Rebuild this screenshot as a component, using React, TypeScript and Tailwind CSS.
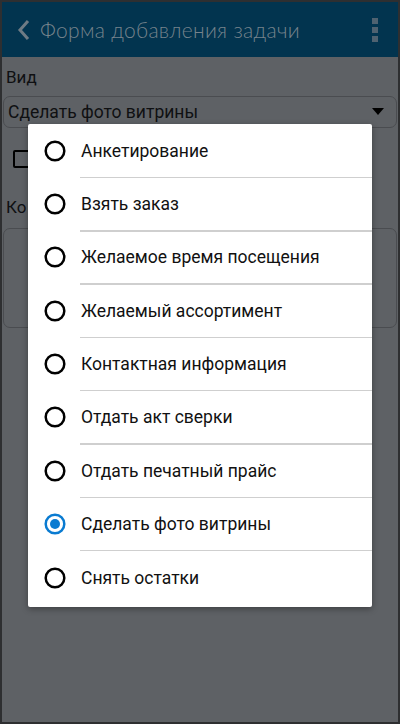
import React from "react";

const items = [
  "Анкетирование",
  "Взять заказ",
  "Желаемое время посещения",
  "Желаемый ассортимент",
  "Контактная информация",
  "Отдать акт сверки",
  "Отдать печатный прайс",
  "Сделать фото витрины",
  "Снять остатки",
];

function Radio({ checked }: { checked: boolean }) {
  return (
    <svg width="24" height="24" viewBox="0 0 24 24">
      <circle cx="12" cy="12" r="9.3" fill="none" stroke={checked ? "#0a7bd1" : "#000"} strokeWidth="2.5" />
      {checked && <circle cx="12" cy="12" r="5" fill="#0a7bd1" />}
    </svg>
  );
}

export default function App() {
  return (
    <div
      className="w-[400px] h-[724px] bg-[#2e2f31] p-[2px] overflow-hidden relative"
      style={{ fontFamily: "Roboto, 'Noto Sans', sans-serif" }}
    >
      <div className="w-full h-full bg-[#5e6165] flex flex-col">
        <div className="h-[55px] bg-[#02344f] flex items-center pl-[14px] pr-[20px]">
          <svg width="16" height="24" viewBox="0 0 16 24">
            <path d="M12 3 L4 12 L12 21" fill="none" stroke="#6f7b84" strokeWidth="3" />
          </svg>
          <span
            className="ml-[8px] text-[21px] text-[#76838c] font-light tracking-[0.3px]"
            style={{ fontFamily: "Lato, 'DejaVu Sans', sans-serif" }}
          >
            Форма добавления задачи
          </span>
          <div className="ml-auto flex flex-col gap-[3px]">
            <div className="w-[6px] h-[6px] bg-[#4f6270]" />
            <div className="w-[6px] h-[6px] bg-[#4f6270]" />
            <div className="w-[6px] h-[6px] bg-[#4f6270]" />
          </div>
        </div>
        <div className="px-[1px] pt-[10px] text-[#0f1012]">
          <div className="text-[17px] leading-[20px] pl-[3px]">Вид</div>
          <div className="mt-[9px] h-[32px] border border-[#4a4c50] rounded-[7px] flex items-center pl-[4px] pr-[12px]">
            <span className="text-[17.5px]">Сделать фото витрины</span>
            <svg className="ml-auto" width="12" height="8" viewBox="0 0 12 8">
              <path d="M0 0 H12 L6 7 Z" fill="#000" />
            </svg>
          </div>
          <div className="mt-[22px] ml-[10px] w-[18px] h-[18px] border-2 border-black rounded-[2px]" />
          <div className="mt-[27px] text-[17px] pl-[3px]">Ко</div>
          <div className="mt-[7px] h-[100px] border border-[#4a4c50] rounded-[7px]" />
        </div>
      </div>

      <div className="absolute left-[28px] top-[124px] w-[344px] bg-white rounded-[2px] shadow-[0_2px_6px_rgba(0,0,0,0.35)] pt-[1px] pb-[2px]">
        {items.map((t, i) => (
          <div key={t} className="h-[53.3px] flex flex-col">
            <div className="flex-1 flex items-center">
              <div className="w-[52px] flex pl-[15px]">
                <Radio checked={i === 7} />
              </div>
              <span className="ml-[1px] text-[17.5px] text-[#111]">{t}</span>
            </div>
            {i < items.length - 1 && <div className="ml-[52px] h-[1.5px] bg-[#cfcfcf]" />}
          </div>
        ))}
      </div>
    </div>
  );
}
